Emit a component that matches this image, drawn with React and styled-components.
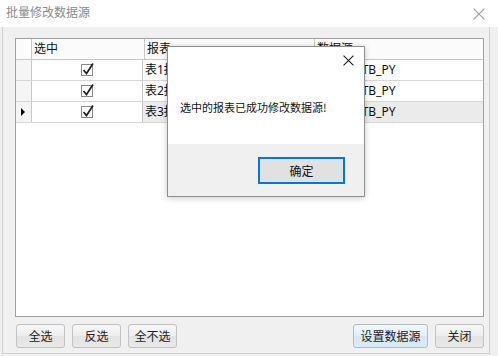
import styled, { createGlobalStyle } from "styled-components";

const GlobalStyle = createGlobalStyle`
	html, body {
		margin: 0;
		padding: 0;
		background: #f0f0f0;
	}
	body {
		font-family: "Noto Sans", "Noto Sans CJK SC", sans-serif;
		font-size: 12px;
		color: #000;
	}
`;

const rows = [
	{ name: "表1报表", source: "FIN_DB_TB_PY" },
	{ name: "表2报表", source: "FIN_DB_TB_PY" },
	{ name: "表3报表", source: "FIN_DB_TB_PY", current: true },
];

const CheckMark = () => (
	<svg width="15" height="15" viewBox="0 0 15 15">
		<rect x="1.5" y="2.5" width="11" height="11" fill="#fff" stroke="#8a8a8a" />
		<path d="M3.5 8 L6.5 11.5 L13 1.5" fill="none" stroke="#222" strokeWidth="1.7" />
	</svg>
);

const CloseIcon = ({ size, color }) => (
	<svg width={size} height={size} viewBox="0 0 10 10">
		<path d="M0.5 0.5 L9.5 9.5 M9.5 0.5 L0.5 9.5" stroke={color} strokeWidth="1" />
	</svg>
);

const App = () => {
	return (
		<WindowSC>
			<GlobalStyle />
			<TitleBarSC>
				<span>批量修改数据源</span>
				<CloseIcon size={12} color="#a0a0a0" />
			</TitleBarSC>
			<BodySC>
				<GridSC>
					<RowSC $header>
						<RowHeadSC $header />
						<CellSC $w={111}>选中</CellSC>
						<CellSC $w={168}>报表</CellSC>
						<CellSC $last>数据源</CellSC>
					</RowSC>
					{rows.map((r) => (
						<RowSC key={r.name}>
							<RowHeadSC>{r.current && <Pointer />}</RowHeadSC>
							<CellSC $w={111} $center>
								<CheckMark />
							</CellSC>
							<CellSC $w={168} $current={r.current}>
								{r.name}
							</CellSC>
							<CellSC $last $current={r.current}>
								{r.source}
							</CellSC>
						</RowSC>
					))}
				</GridSC>
				<ButtonBarSC>
					<GroupSC>
						<ButtonSC>全选</ButtonSC>
						<ButtonSC>反选</ButtonSC>
						<ButtonSC>全不选</ButtonSC>
					</GroupSC>
					<GroupSC>
						<ButtonSC $w={75} $focused>
							设置数据源
						</ButtonSC>
						<ButtonSC>关闭</ButtonSC>
					</GroupSC>
				</ButtonBarSC>
			</BodySC>
			<DialogSC>
				<DialogMainSC>
					<DialogCloseSC>
						<CloseIcon size={11} color="#222" />
					</DialogCloseSC>
					<MessageSC>选中的报表已成功修改数据源!</MessageSC>
				</DialogMainSC>
				<DialogFooterSC>
					<OkButtonSC>确定</OkButtonSC>
				</DialogFooterSC>
			</DialogSC>
		</WindowSC>
	);
};

const WindowSC = styled.div`
	position: relative;
	width: 498px;
	height: 356px;
	overflow: hidden;
	display: flex;
	flex-direction: column;
`;

const TitleBarSC = styled.div`
	height: 27px;
	flex: none;
	background: #fff;
	display: flex;
	align-items: center;
	justify-content: space-between;
	padding: 0 13px 0 6px;
	color: #8c8c8c;
	font-size: 12px;
	span {
		line-height: 14px;
		margin-top: -2px;
	}
`;

const BodySC = styled.div`
	margin-left: 2px;
	border: 1px solid #cfcfcf;
	border-top: none;
	background: #f0f0f0;
	display: flex;
	flex-direction: column;
	padding: 11px 5px 0 12px;
	box-sizing: content-box;
	width: 469px;
	height: 315px;
`;

const GridSC = styled.div`
	height: 277px;
	border: 1px solid #a0a0a0;
	background: #fff;
	display: flex;
	flex-direction: column;
`;

const RowSC = styled.div`
	display: flex;
	height: 20px;
	border-bottom: 1px solid ${(p) => (p.$header ? "#c8c8c8" : "#d6d6d6")};
	background: ${(p) => (p.$header ? "#fbfbfb" : "#fff")};
	flex: none;
`;

const RowHeadSC = styled.div`
	width: 15px;
	flex: none;
	border-right: 1px solid #c8c8c8;
	background: ${(p) => (p.$header ? "#fbfbfb" : "#f5f5f5")};
	display: flex;
	align-items: center;
	justify-content: center;
`;

const Pointer = styled.div`
	width: 0;
	height: 0;
	border-top: 4px solid transparent;
	border-bottom: 4px solid transparent;
	border-left: 4px solid #000;
	margin-left: -1px;
`;

const CellSC = styled.div`
	width: ${(p) => (p.$last ? "auto" : `${p.$w - 1}px`)};
	flex: ${(p) => (p.$last ? "1" : "none")};
	border-right: ${(p) => (p.$last ? "none" : "1px solid #c8c8c8")};
	background: ${(p) => (p.$current ? "#ebebeb" : "transparent")};
	display: flex;
	align-items: center;
	justify-content: ${(p) => (p.$center ? "center" : "flex-start")};
	padding-left: ${(p) => (p.$center ? "0" : "2px")};
	font-size: 12px;
	line-height: 14px;
	white-space: nowrap;
	overflow: hidden;
	color: #111;
	svg {
		margin-top: -2px;
	}
`;

const ButtonBarSC = styled.div`
	display: flex;
	justify-content: space-between;
	margin: 7px 0 0 1px;
`;

const GroupSC = styled.div`
	display: flex;
	gap: 7px;
`;

const ButtonSC = styled.button`
	width: ${(p) => p.$w || 49}px;
	height: 24px;
	padding: 0;
	border: 1px solid ${(p) => (p.$focused ? "#b0bcc8" : "#c2c2c2")};
	border-radius: 3px;
	background: ${(p) =>
		p.$focused
			? "linear-gradient(#f1f8fd, #e1eef9 50%, #d5e7f6 51%, #dbeaf7)"
			: "linear-gradient(#f7f7f7, #ededed 50%, #e2e2e2 51%, #e9e9e9)"};
	font-family: "Noto Sans CJK SC", sans-serif;
	font-size: 12px;
	line-height: 14px;
	color: #222;
`;

const DialogSC = styled.div`
	position: absolute;
	left: 167px;
	top: 46px;
	width: 196px;
	height: 149px;
	border: 1px solid #8f8f8f;
	box-shadow: 0 1px 6px rgba(0, 0, 0, 0.22);
	background: #fff;
	display: flex;
	flex-direction: column;
`;

const DialogMainSC = styled.div`
	position: relative;
	height: 97px;
	padding: 0 0 0 12px;
	display: flex;
	align-items: center;
`;

const DialogCloseSC = styled.div`
	position: absolute;
	top: 8px;
	right: 10px;
	display: flex;
`;

const MessageSC = styled.div`
	font-family: "Noto Sans CJK SC", sans-serif;
	font-size: 11px;
	line-height: 13px;
	margin-top: 23px;
	color: #111;
`;

const DialogFooterSC = styled.div`
	flex: 1;
	background: #f0f0f0;
	display: flex;
	justify-content: flex-end;
	align-items: flex-start;
	padding: 13px 19px 0 0;
`;

const OkButtonSC = styled.button`
	width: 87px;
	height: 27px;
	border: 2px solid #0078d7;
	background: #e1e1e1;
	padding: 0;
	font-family: "Noto Sans CJK SC", sans-serif;
	font-size: 12px;
	line-height: 14px;
	color: #111;
`;

export default App;
